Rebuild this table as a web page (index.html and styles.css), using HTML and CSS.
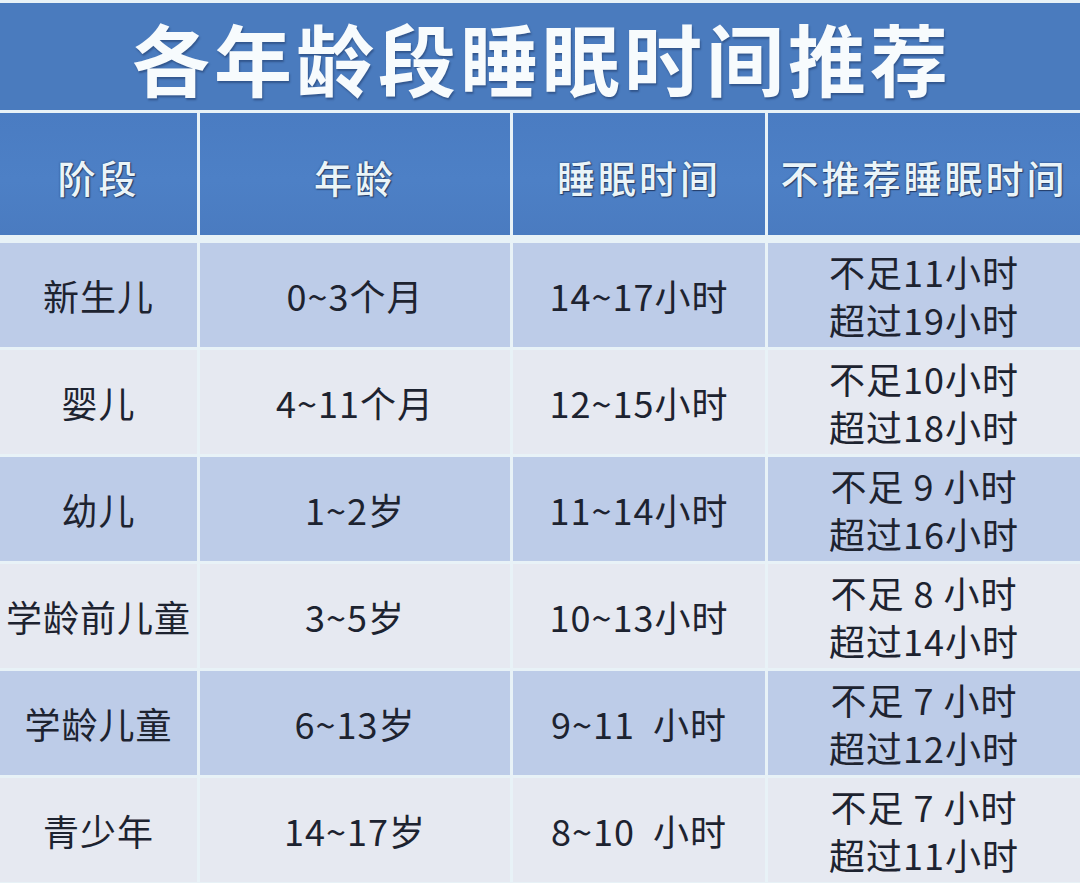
FILE: index.html
```html
<!DOCTYPE html>
<html lang="zh-CN">
<head>
<meta charset="utf-8">
<title>各年龄段睡眠时间推荐</title>
<link rel="stylesheet" href="styles.css">
</head>
<body>
<div class="page">
  <div class="title">各年龄段睡眠时间推荐</div>
  <div class="row head">
    <div class="cell">阶段</div>
    <div class="cell">年龄</div>
    <div class="cell">睡眠时间</div>
    <div class="cell">不推荐睡眠时间</div>
  </div>
  <div class="rows">
    <div class="row odd">
      <div class="cell">新生儿</div>
      <div class="cell">0~3个月</div>
      <div class="cell">14~17小时</div>
      <div class="cell two"><span>不足11小时</span><span>超过19小时</span></div>
    </div>
    <div class="row even">
      <div class="cell">婴儿</div>
      <div class="cell">4~11个月</div>
      <div class="cell">12~15小时</div>
      <div class="cell two"><span>不足10小时</span><span>超过18小时</span></div>
    </div>
    <div class="row odd">
      <div class="cell">幼儿</div>
      <div class="cell">1~2岁</div>
      <div class="cell">11~14小时</div>
      <div class="cell two"><span>不足 9 小时</span><span>超过16小时</span></div>
    </div>
    <div class="row even">
      <div class="cell">学龄前儿童</div>
      <div class="cell">3~5岁</div>
      <div class="cell">10~13小时</div>
      <div class="cell two"><span>不足 8 小时</span><span>超过14小时</span></div>
    </div>
    <div class="row odd">
      <div class="cell">学龄儿童</div>
      <div class="cell">6~13岁</div>
      <div class="cell">9~11&nbsp;&nbsp;小时</div>
      <div class="cell two"><span>不足 7 小时</span><span>超过12小时</span></div>
    </div>
    <div class="row even">
      <div class="cell">青少年</div>
      <div class="cell">14~17岁</div>
      <div class="cell">8~10&nbsp;&nbsp;小时</div>
      <div class="cell two"><span>不足 7 小时</span><span>超过11小时</span></div>
    </div>
  </div>
</div>
</body>
</html>
```
FILE: styles.css
```css
html, body {
  margin: 0;
  padding: 0;
}
body {
  background: #e8f2f7;
  width: 1080px;
  height: 883px;
  overflow: hidden;
  font-family: "Noto Sans CJK SC", "Noto Sans", sans-serif;
}
.page {
  padding-top: 3px;
  display: flex;
  flex-direction: column;
}
.title {
  height: 107px;
  margin-bottom: 3px;
  background: #4a7bbe;
  color: #f7fbfd;
  font-size: 78px;
  font-weight: 700;
  letter-spacing: 4px;
  display: flex;
  align-items: center;
  justify-content: center;
  line-height: 1;
  padding-left: 4px;
  text-shadow: 1px 2px 2px rgba(20, 40, 80, 0.45);
}
.row {
  display: grid;
  grid-template-columns: 197px 310px 252px 1fr;
  column-gap: 3px;
}
.cell {
  display: flex;
  align-items: center;
  justify-content: center;
  text-align: center;
}
.head {
  height: 122px;
  margin-bottom: 8px;
}
.head .cell {
  background: linear-gradient(180deg, #4a7cc2 0%, #4d80c6 55%, #4a7bc0 100%);
  color: #eaf4f8;
  font-size: 38px;
  font-weight: 500;
  letter-spacing: 3px;
  padding-top: 4px;
  text-shadow: 0 0 2px rgba(30, 50, 90, 0.9), 1px 1px 1px rgba(30, 50, 90, 0.8);
}
.rows {
  display: flex;
  flex-direction: column;
  gap: 3px;
}
.rows .row {
  height: 104px;
}
.rows .cell {
  color: #1d2330;
  font-size: 36px;
  font-weight: 400;
  letter-spacing: 1px;
  line-height: 48px;
}
.odd .cell {
  background: #bdcce8;
}
.even .cell {
  background: #e6e9f1;
}
.two {
  flex-direction: column;
}
.two span {
  display: block;
}
```
